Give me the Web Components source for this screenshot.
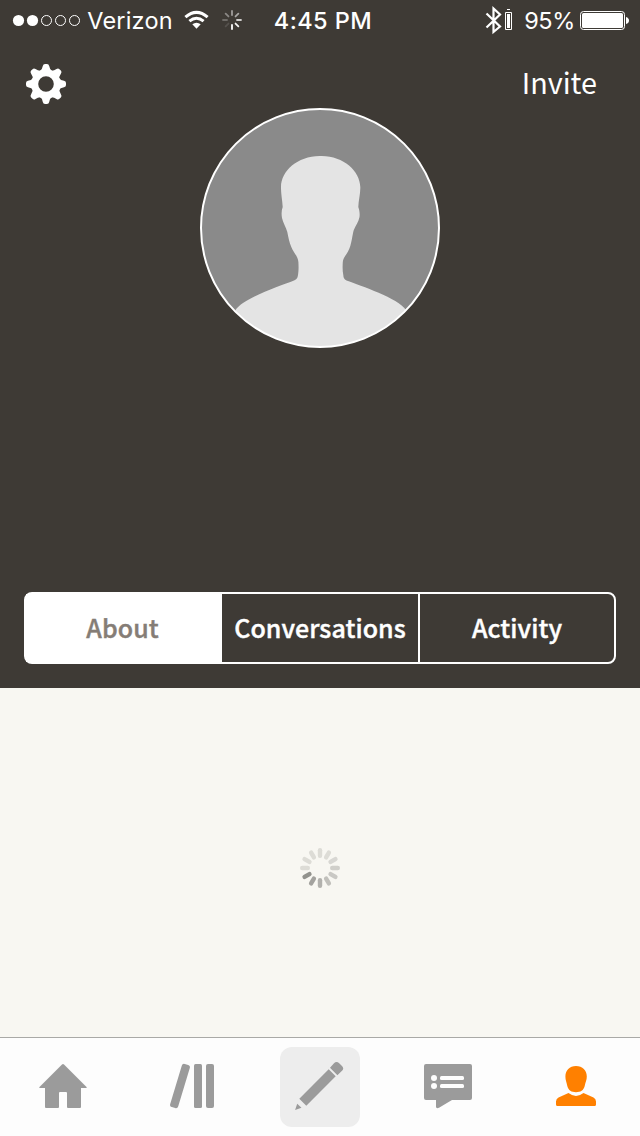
<!DOCTYPE html>
<html lang="en">

<head>
  <meta charset="UTF-8">
  <meta name="viewport" content="width=device-width, initial-scale=1.0">
  <title>Profile</title>
  <style>
    body {
      margin: 0;
      overflow: hidden;
      background: #f8f7f2;
      font-family: "Noto Sans CJK JP", "Open Sans", sans-serif;
    }
  </style>
</head>

<body>
  <profile-app></profile-app>

  <script>
    // Small helper: every element gets an open shadow root with its own markup
    function define(name, render) {
      customElements.define(name, class extends HTMLElement {
        constructor() {
          super();
          this.attachShadow({ mode: 'open' });
        }
        connectedCallback() {
          this.shadowRoot.innerHTML = render(this);
        }
      });
    }

    const range = n => [...Array(n).keys()];

    // Spokes of a spinner, clockwise from the top
    function spokes(opacities, inner, outer, width, color) {
      const step = 360 / opacities.length;
      return opacities.map((o, i) =>
        `<line y1="${-inner}" y2="${-outer}" stroke="${color}" stroke-opacity="${o}" stroke-width="${width}" stroke-linecap="round" transform="rotate(${i * step})"/>`
      ).join('');
    }

    define('status-bar', () => `
      <style>
        :host {
          display: flex;
          align-items: center;
          box-sizing: border-box;
          height: 40px;
          padding-left: 12px;
          color: #fff;
          font: 400 23.5px/40px Inter, Roboto, sans-serif;
          white-space: nowrap;
        }
        svg { display: block; flex: none; }
        span { display: flex; justify-content: center; flex: none; padding-top: 1px; }
        .carrier { width: 84px; margin-left: 7px; font-weight: 380; letter-spacing: 0.2px; }
        .wifi { margin-left: 12px; }
        .busy { margin-left: 12px; }
        .time { width: 100px; margin-left: 31px; font-weight: 550; font-size: 23.5px; letter-spacing: 0.45px; }
        .bt { margin-left: 112px; }
        .percent { width: 50px; margin-left: 10.5px; font-weight: 380; letter-spacing: -0.4px; }
        .battery { margin-left: 5.5px; }
      </style>
      <svg width="69" height="40">
        ${range(5).map(i => i < 2
          ? `<circle cx="${6.5 + i * 14}" cy="20.5" r="5.6" fill="#fff"/>`
          : `<circle cx="${6.5 + i * 14}" cy="20.5" r="5" fill="none" stroke="#fff"/>`).join('')}
      </svg>
      <span class="carrier">Verizon</span>
      <svg class="wifi" width="26" height="40" fill="none" stroke="#fff" stroke-width="3">
        <path d="M1.4 17.2Q12.5 7.5 23.6 17.2"/>
        <path d="M5.4 21.2Q12.5 15.4 19.6 21.2"/>
        <path d="M8.3 24.3Q12.5 21 16.7 24.3L12.5 28.7Z" fill="#fff" stroke="none"/>
      </svg>
      <svg class="busy" width="20" height="40">
        <g transform="translate(10 20)">${spokes([0.5, 0.55, 0.75, 0.95, 1, 0.12, 0.25, 0.4], 5, 9, 1.8, '#fff')}</g>
      </svg>
      <span class="time">4:45 PM</span>
      <svg class="bt" width="29" height="40" fill="none" stroke="#fff">
        <path stroke-width="2.2" d="M1.5 13.5L15 26.5L8.5 32V8.5L15 14.5L1.5 27.5"/>
        <path stroke-width="1" d="M20.5 12.5h6v17h-6z M22 9.5h3"/>
        <path fill="#fff" stroke="none" d="M22 14h3v14h-3z"/>
      </svg>
      <span class="percent">95%</span>
      <svg class="battery" width="50" height="40">
        <rect x="0.5" y="11.5" width="44" height="18" rx="3" fill="none" stroke="#fff"/>
        <rect x="2" y="13" width="41" height="15" rx="1.5" fill="#fff"/>
        <path d="M46 17q3 1 3 3.5t-3 3.5z" fill="#fff"/>
      </svg>
    `);

    define('nav-row', () => `
      <style>
        :host {
          display: flex;
          justify-content: space-between;
          align-items: flex-start;
          height: 68px;
          padding: 24px 43px 0 26px;
          box-sizing: border-box;
          color: #fff;
        }
        svg { display: block; }
        .action { font-size: 28.8px; line-height: 36px; }
      </style>
      <svg width="40" height="40" viewBox="-20 -20 40 40">
        <circle r="11.2" fill="none" stroke="#fff" stroke-width="6.8"/>
        ${range(8).map(i =>
          `<path transform="rotate(${i * 45})" fill="#fff" d="M-6.5 -12.5Q-3.7 -14.3 -3.2 -18Q-2.8 -20 -1 -20H1Q2.8 -20 3.2 -18Q3.7 -14.3 6.5 -12.5Z"/>`
        ).join('')}
      </svg>
      <div class="action"><slot></slot></div>
    `);

    define('user-avatar', () => `
      <style>
        :host {
          display: block;
          width: 240px;
          height: 240px;
        }
        svg { display: block; }
      </style>
      <svg width="240" height="240">
        <clipPath id="c"><circle cx="120" cy="120" r="119"/></clipPath>
        <circle cx="120" cy="120" r="119" fill="#8a8a8a"/>
        <path clip-path="url(#c)" fill="#e4e4e4" d="M120.7 48C98 47.5 81 63 81 79
          C81 87 82.4 92 82.7 99C81.5 102 81.3 106 82 110C83 115 86 119 87.3 124
          C88.5 130 89.3 134 91.3 139C93.5 145 98 148 98.4 154
          C98.7 160 98.6 163 98 167C97.5 170 97 171 94 172.5
          C80 178 43 190 35.5 202L30 240H212L206 202
          C198 190 161 178 146.5 172.5C144 171 143.5 170 143.3 167
          C142.5 163 142.5 159 142.8 154C143 149 148 146 150.3 138
          C152.3 131 152.3 127 153.8 122C156 117 158.5 114 159.5 109
          C160 105 159.3 102 158.3 99C158.5 92 160.5 86 160.3 79C160 63 143 47.5 120.7 48Z"/>
        <circle cx="120" cy="120" r="119" fill="none" stroke="#fff" stroke-width="2"/>
      </svg>
    `);

    define('segment-item', el => `
      <style>
        :host {
          display: flex;
          align-items: center;
          justify-content: center;
          padding-bottom: 2px;
          color: #fff;
          font-size: 25px;
          font-weight: 500;
          line-height: 36px;
          letter-spacing: 0.06px;
          -webkit-text-stroke: 0.4px currentColor;
        }
        :host([selected]) {
          padding-right: 3px;
          background: #fff;
          color: #857d76;
        }
        :host(:last-child) { border-left: 2px solid #fff; }
      </style>
      <slot></slot>
    `);

    define('segment-control', () => `
      <style>
        :host {
          display: grid;
          grid-template-columns: 196px 196px 1fr;
          box-sizing: border-box;
          height: 72px;
          margin: 0 24px;
          border: 2px solid #fff;
          border-radius: 8px;
        }
      </style>
      <slot></slot>
    `);

    define('profile-header', () => `
      <style>
        :host {
          display: flex;
          flex-direction: column;
          box-sizing: border-box;
          height: 688px;
          padding-bottom: 24px;
          background: #3e3a35;
        }
        .middle {
          flex: 1;
          display: flex;
          justify-content: center;
        }
      </style>
      <status-bar></status-bar>
      <nav-row>Invite</nav-row>
      <div class="middle"><user-avatar></user-avatar></div>
      <slot></slot>
    `);

    define('loading-spinner', () => `
      <style>
        :host {
          display: flex;
          flex: 1;
          align-items: center;
          justify-content: center;
          padding-top: 11px;
        }
      </style>
      <svg width="40" height="40" viewBox="-20 -20 40 40">
        ${spokes([0.13, 0.13, 0.15, 0.19, 0.22, 0.26, 0.33, 0.4, 0.48, 0.13, 0.13, 0.13], 12.2, 17.8, 4.4, '#242420')}
      </svg>
    `);

    const icons = {
      home: `<path d="M23 .6Q24 -.5 25 .6L47.5 23Q48.5 24 47 24H42V43Q42 44 41 44H29Q28 44 28 43V29Q28 28 27 28H21Q20 28 20 29V43Q20 44 19 44H7Q6 44 6 43V24H1Q-.5 24 .5 23Z" transform="translate(-1 0)"/>`,
      books: `<rect x="-4.2" y="-22.5" width="8.4" height="45" rx="2.5" transform="translate(12 22) rotate(16.8)"/>
        <rect x="26" width="8" height="44" rx="1.5"/><rect x="38" width="8" height="44" rx="2"/>`,
      pencil: `<path d="M-.9 46L1.2 39.8L5.5 43.8ZM3.3 34.7L32.7 5.3L39.7 12.3L10.3 41.7ZM34 3.7L38 -.8Q40.5 -3.2 43.2 -.8L46 2Q48.3 4.3 46.3 6.5L41.4 11.2Z"/>`,
      chat: `<path d="M2 0H46Q48 0 48 2V34Q48 36 46 36H28L15 43.7Q12 45 12 42.5V36H2Q0 36 0 34V2Q0 0 2 0Z"/>
        <g fill="#fdfdfd"><circle cx="10" cy="14" r="3"/><circle cx="10" cy="22" r="3"/>
        <rect x="16" y="12" width="24" height="4" rx="1.5"/><rect x="16" y="20" width="24" height="4" rx="1.5"/></g>`,
      person: `<path d="M24 2C30.5 2 34.8 6.5 34.8 12.5C34.8 16 33.5 18 32.7 22C31.6 26.5 28.5 28.2 24 28.2C19.5 28.2 16.4 26.5 15.3 22C14.5 18 13.4 16 13.4 12.5C13.4 6.5 17.5 2 24 2Z"/>
        <path d="M16.5 29Q24 34.8 31.5 29L41.5 33.5Q44 34.8 44 37.5V40.5Q44 42 42.5 42H5.5Q4 42 4 40.5V37.5Q4 34.8 6.5 33.5Z"/>`
    };

    define('tab-item', el => `
      <style>
        :host {
          display: flex;
          align-items: center;
          justify-content: center;
          color: #9b9b9b;
        }
        :host([active]) { color: #ff8000; }
        .box {
          display: flex;
          align-items: center;
          justify-content: center;
          width: 80px;
          height: 80px;
          border-radius: 12px;
        }
        :host([raised]) .box { background: #ededed; }
        svg { display: block; overflow: visible; margin-top: -2px; }
      </style>
      <div class="box">
        <svg width="48" height="44" fill="currentColor">${icons[el.getAttribute('icon')]}</svg>
      </div>
    `);

    define('tab-bar', () => `
      <style>
        :host {
          display: grid;
          grid-template-columns: repeat(5, 1fr);
          box-sizing: border-box;
          height: 99px;
          border-top: 1px solid #a9a9a6;
          background: #fdfdfd;
        }
      </style>
      <slot></slot>
    `);

    define('profile-app', () => `
      <style>
        :host {
          display: flex;
          flex-direction: column;
          width: 640px;
          height: 1136px;
        }
      </style>
      <profile-header>
        <segment-control>
          <segment-item selected>About</segment-item>
          <segment-item>Conversations</segment-item>
          <segment-item>Activity</segment-item>
        </segment-control>
      </profile-header>
      <loading-spinner></loading-spinner>
      <tab-bar>
        <tab-item icon="home"></tab-item>
        <tab-item icon="books"></tab-item>
        <tab-item icon="pencil" raised></tab-item>
        <tab-item icon="chat"></tab-item>
        <tab-item icon="person" active></tab-item>
      </tab-bar>
    `);
  </script>
</body>

</html>
